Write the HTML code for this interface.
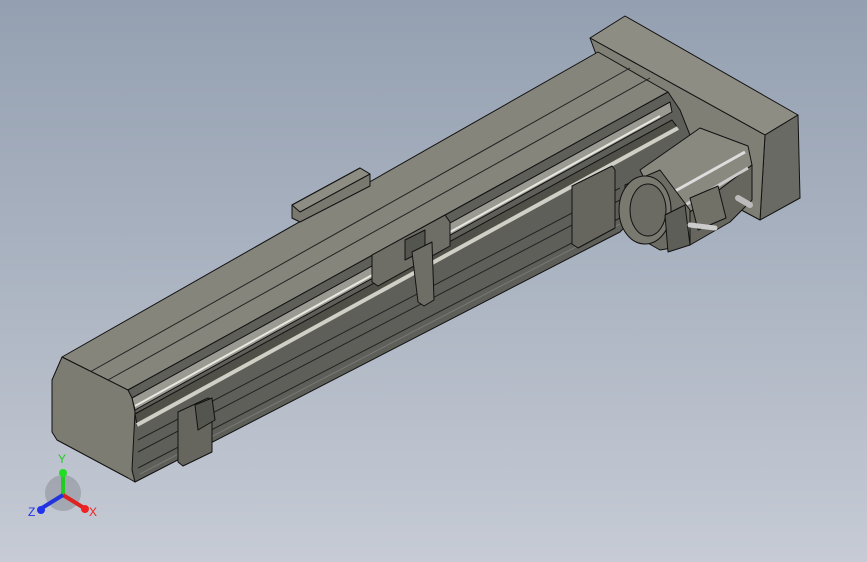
<!DOCTYPE html>
<html><head><meta charset="utf-8"><style>
html,body{margin:0;padding:0}
body{width:867px;height:562px;overflow:hidden;background:linear-gradient(180deg,#94a0b1 0%,#a9b2c0 45%,#c6cbd5 100%)}
svg{display:block}
</style></head><body>
<svg width="867" height="562" viewBox="0 0 867 562" xmlns="http://www.w3.org/2000/svg" stroke="#111" stroke-width="1" stroke-linejoin="round">
<!-- rear block -->
<polygon points="590,38 625,16 798,115 765,135" fill="#8e8d84"/>
<polygon points="765,135 798,115 800,198 760,220" fill="#6a6a64"/>
<polygon points="590,38 765,135 760,220 700,188 680,110 600,65" fill="#807f76"/>
<!-- main body top -->
<polygon points="62,357 598,52 668,92 128,390" fill="#86857c"/>
<line x1="90" y1="372" x2="630" y2="68" stroke="#222"/>
<line x1="108" y1="380" x2="650" y2="78" stroke="#222"/>
<!-- front face -->
<polygon points="128,390 668,92 680,110 690,135 690,160 620,232 135,482 130,470 132,420" fill="#5f5f5a"/>
<polygon points="132,398 670,102 672,112 135,410" fill="#9a9992"/>
<line x1="135" y1="406" x2="660" y2="116" stroke="#e8e8e0" stroke-width="2"/>
<polygon points="135,414 672,120 678,128 137,425" fill="#505049"/>
<line x1="137" y1="425" x2="678" y2="128" stroke="#cfcfc6" stroke-width="4"/>
<line x1="138" y1="440" x2="620" y2="188" stroke="#222"/>
<line x1="138" y1="452" x2="620" y2="200" stroke="#222"/>
<line x1="138" y1="468" x2="620" y2="218" stroke="#222"/>
<line x1="140" y1="474" x2="620" y2="224" stroke="#777"/>
<!-- end face -->
<polygon points="62,357 128,390 132,398 135,412 132,470 135,482 128,478 57,440 52,432 52,380" fill="#7d7c72"/>
<!-- top plate on carriage -->
<polygon points="292,205 360,168 370,174 370,186 300,222 292,218" fill="#7a7970"/>
<polygon points="292,205 360,168 370,174 300,212" fill="#8e8d84"/>
<!-- carriage block -->
<polygon points="372,255 445,215 450,222 450,246 378,286 372,282" fill="#6e6e66"/>
<polygon points="405,240 425,230 425,250 405,260" fill="#55554f"/>
<polygon points="412,252 432,242 434,300 424,306 418,302" fill="#6e6e66"/>
<!-- right bracket -->
<polygon points="572,186 612,166 615,170 615,228 578,248 572,244" fill="#66665e"/>
<!-- left bracket -->
<polygon points="178,412 208,398 212,400 212,452 183,466 178,462" fill="#66665e"/>
<polygon points="195,405 212,398 215,420 198,430" fill="#55554f"/>
<!-- motor -->
<polygon points="640,170 700,128 748,146 752,165 690,212 655,200" fill="#8a8980"/>
<polygon points="690,212 752,165 752,200 730,222 690,245" fill="#66665e"/>
<line x1="668" y1="195" x2="745" y2="152" stroke="#ddd" stroke-width="3"/>
<line x1="680" y1="208" x2="748" y2="168" stroke="#ccc" stroke-width="3"/>
<polygon points="625,185 660,170 690,210 690,245 660,250 625,230" fill="#6c6c64"/>
<ellipse cx="645" cy="210" rx="26" ry="34" fill="#7a7970"/>
<ellipse cx="648" cy="210" rx="18" ry="26" fill="#6b6b63"/>
<polygon points="665,215 685,205 690,245 668,252" fill="#5e5e58"/>
<polygon points="690,198 718,186 726,218 698,230" fill="#727168"/>
<line x1="690" y1="225" x2="715" y2="228" stroke="#ccc" stroke-width="5" stroke-linecap="round"/>
<line x1="738" y1="198" x2="750" y2="205" stroke="#bbb" stroke-width="6" stroke-linecap="round"/>
<!-- triad -->
<circle cx="63" cy="493" r="18" fill="#8f939c" stroke="none" opacity=".6"/>
<line x1="63" y1="495" x2="63" y2="474" stroke="#22cc22" stroke-width="4"/>
<circle cx="63" cy="473" r="4" fill="#22dd22" stroke="none"/>
<line x1="63" y1="495" x2="84" y2="508" stroke="#dd2222" stroke-width="4"/>
<circle cx="85" cy="509" r="4" fill="#ee2222" stroke="none"/>
<line x1="63" y1="495" x2="42" y2="508" stroke="#2233dd" stroke-width="4"/>
<circle cx="41" cy="510" r="4" fill="#2233ee" stroke="none"/>
<g stroke="none" font-family="Liberation Sans, sans-serif" font-size="12">
<text x="58" y="463" fill="#22cc22">Y</text>
<text x="89" y="516" fill="#ee2222">X</text>
<text x="28" y="516" fill="#2233ee">Z</text>
</g>
</svg>
</body></html>
